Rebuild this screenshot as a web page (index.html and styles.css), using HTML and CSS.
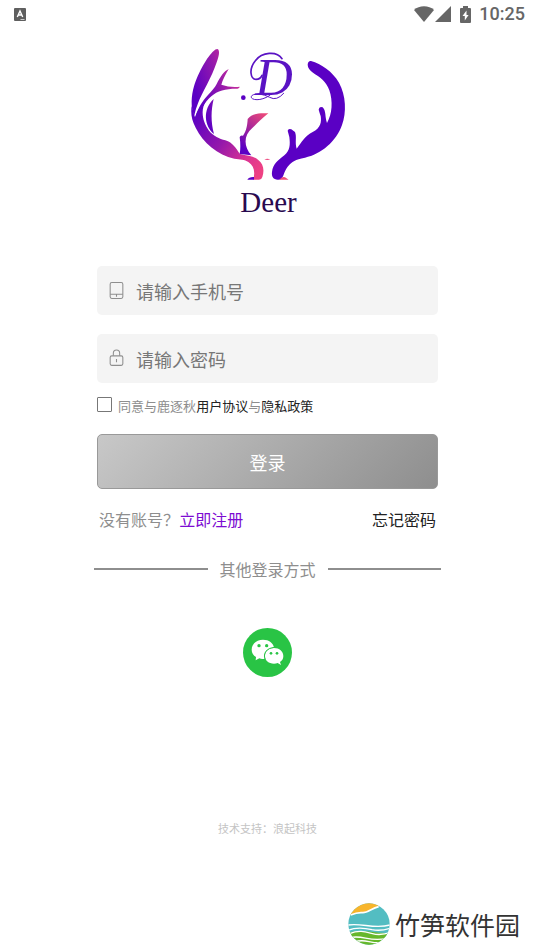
FILE: index.html
```html
<!DOCTYPE html>
<html lang="zh-CN">
<head>
  <meta charset="UTF-8">
  <meta name="viewport" content="width=device-width, initial-scale=1.0">
  <title>登录</title>
  <link rel="stylesheet" href="styles.css">
</head>
<body>
  <header class="status-bar">
    <svg class="status-app" viewBox="0 0 12 13" aria-hidden="true">
      <rect width="12" height="13" rx="1" fill="#5f5f5f"/>
      <path d="M3.3 9 6 3l2.7 6M4.3 7h3.4" fill="none" stroke="#fff" stroke-width="1.4"/>
      <path d="M6.500 11.500h4" stroke="#ccc" stroke-width="1"/>
    </svg>
    <div class="status-right">
      <svg class="status-signal" viewBox="0 0 38 16" aria-hidden="true">
        <path d="M0 4C5-1 15-1 20 4L10 16Z" fill="#666"/>
        <path d="M37 0v16H21Z" fill="#666"/>
      </svg>
      <svg class="status-battery" viewBox="0 0 11 17" aria-hidden="true">
        <path d="M3 0h5v2h2q1 0 1 1v13q0 1-1 1H1q-1 0-1-1V3q0-1 1-1h2Z" fill="#666"/>
        <path d="M6.500 4.500 2.500 10h2.300v4.500L8.600 9H6.500Z" fill="#fff"/>
      </svg>
      <span class="status-time">10:25</span>
    </div>
  </header>

  <main class="login">
    <svg class="logo" viewBox="0 0 540 540" role="img" aria-label="Deer">
      <defs>
        <linearGradient id="antler" gradientUnits="userSpaceOnUse" x1="35" y1="230" x2="250" y2="380">
          <stop offset="0" stop-color="#5a00c4"/>
          <stop offset=".45" stop-color="#9418ab"/>
          <stop offset=".8" stop-color="#dc3492"/>
          <stop offset="1" stop-color="#ee4183"/>
        </linearGradient>
        <linearGradient id="tip" gradientUnits="userSpaceOnUse" x1="50" y1="170" x2="190" y2="120">
          <stop offset="0" stop-color="#5a00c4"/>
          <stop offset=".5" stop-color="#9018ae"/>
          <stop offset="1" stop-color="#d83494"/>
        </linearGradient>
        <linearGradient id="ear" gradientUnits="userSpaceOnUse" x1="182" y1="320" x2="262" y2="222">
          <stop offset="0" stop-color="#5a00c4"/>
          <stop offset=".5" stop-color="#a92799"/>
          <stop offset="1" stop-color="#f04b78"/>
        </linearGradient>
      </defs>
      <!-- left antler -->
      <path fill="url(#tip)" d="M112 27C121 30 117 49 109 70C96 110 66 159 54 190Q47 207 43 226C31 204 34 166 42 139C55 97 83 48 101 33Q106 27 112 27Z"/>
      <path fill="url(#tip)" d="M146 87C136 105 128 119 124 134Q150 143 179 140Q178 146 168 146C137 146 112 152 94 169C74 186 60 210 52 242L46 232C52 208 66 184 84 165C96 152 104 144 110 132C121 109 133 93 146 87Z"/>
      <path fill="url(#antler)" d="M35 198L45 232C52 212 64 193 78 182C60 211 68 246 87 272C101 288 118 296 136 301C159 308 168 326 180 342C202 348 220 347 234 359C250 372 254 388 247 411Q245 419 237 419H220C226 395 222 377 205 366C194 358 180 359 163 356C113 345 69 308 47 263C34 239 32 218 35 198Z"/>
      <path fill="url(#tip)" d="M101 177C93 211 92 245 102 282C73 258 67 209 101 177Z"/>
      <path fill="#5a00c4" d="M202 419Q207 410 222 411V419Z"/>
      <!-- ear -->
      <path fill="url(#ear)" d="M265 220C247 234 232 250 217 264C191 285 190 319 214 346L179 342Q183 320 179 292Q181 284 189 287C200 272 202 254 203 237C215 221 237 218 265 220Z"/>
      <path fill="#ee4a80" d="M253 358q9-4 18 0q-9 4-18 0Z"/>
      <!-- right antler -->
      <path fill="#5a00c4" d="M393 63C424 72 457 94 477 128C498 166 500 217 486 255C469 304 424 342 375 353C344 359 338 363 323 380C309 397 312 419 295 419C281 420 274 410 276 396C279 371 295 360 313 346C330 331 331 315 328 291L323 272Q325 264 334 268L345 276C351 291 344 307 350 326C363 309 376 286 398 276C422 264 425 247 422 228Q419 220 416 209Q417 198 428 202C439 213 434 230 441 249C457 222 459 183 448 151C439 124 419 111 399 98Q383 86 383 74Q384 62 393 63Z"/>
      <path fill="#f05078" d="M298 419Q306 408 315 412L326 419Z"/>
      <!-- monogram and its flourishes -->
      <circle cx="190" cy="173" r="7" fill="#5a00c4"/>
      <text class="logo-letter" x="226" y="166">D</text>
      <g fill="none" stroke="#5a13c4" stroke-linecap="round">
        <path d="M306 56C290 32 246 36 226 62C205 88 212 118 228 118Q241 118 246 106" stroke-width="5"/>
        <path d="M274 162C255 180 221 184 214 173C211 159 245 159 269 172Q290 184 311 160" stroke-width="3"/>
      </g>
      <text class="logo-name" x="181" y="515">Deer</text>
    </svg>

    <form class="form">
      <label class="field">
        <svg class="field-icon" viewBox="0 0 14 18" aria-hidden="true">
          <rect x="1" y="1.500" width="12" height="15" rx="1.500"/>
          <path d="M1 12.500h12M7 12.500v2.500"/>
        </svg>
        <input type="tel" placeholder="请输入手机号" aria-label="手机号">
      </label>
      <label class="field">
        <svg class="field-icon" viewBox="0 0 14 18" aria-hidden="true">
          <rect x="1" y="6.500" width="12" height="9" rx="1.500"/>
          <path d="M4 6.500V4a3 3 0 0 1 6 0v2.500M7 9.500v3"/>
        </svg>
        <input type="password" placeholder="请输入密码" aria-label="密码">
      </label>

      <div class="agree">
        <input type="checkbox" id="agree">
        <label for="agree">同意与鹿逐秋<a href="#">用户协议</a>与<a href="#">隐私政策</a></label>
      </div>

      <button type="submit" class="submit">登录</button>
    </form>

    <div class="links">
      <span>没有账号？<a href="#" class="register">立即注册</a></span>
      <a href="#">忘记密码</a>
    </div>

    <div class="divider">其他登录方式</div>

    <button type="button" class="wechat" aria-label="微信登录">
      <svg viewBox="0 0 147 147">
        <circle cx="73.500" cy="73.500" r="73.500" fill="#29c445"/>
        <path fill="#fff" d="M60 35C40 35 26 48 26 65C26 75 31 82 39 87L38 97L49 91Q56 94 66 92A28 25 0 0 1 93 59C91 45 78 35 60 35Z"/>
        <path fill="#fff" d="M93 60C77 60 66 70 66 84S77 107 93 107Q99 107 104 105L114 111L111 102C118 98 121 92 121 84C121 70 109 60 93 60Z"/>
        <path fill="none" stroke="#29c445" stroke-width="3" d="M66 94C60 76 70 60 95 58"/>
        <g fill="#29c445">
          <circle cx="48" cy="53" r="5"/>
          <circle cx="71" cy="53" r="5"/>
          <circle cx="84" cy="76" r="4"/>
          <circle cx="102" cy="76" r="4"/>
        </g>
      </svg>
    </button>

    <p class="support">技术支持：浪起科技</p>
  </main>

  <footer class="brand">
    <svg class="brand-icon" viewBox="0 0 126 126" aria-hidden="true">
      <defs>
        <clipPath id="disc"><circle cx="63" cy="63" r="62"/></clipPath>
      </defs>
      <g clip-path="url(#disc)">
        <rect width="126" height="126" fill="#53bdc2"/>
        <path d="M0 0H98L88 13C71 16 60 29 45 29Q29 27 8 36H0Z" fill="#f8b52c"/>
        <path d="M8 36Q29 27 45 29C60 29 71 16 92 11" fill="none" stroke="#fff" stroke-width="5"/>
        <path d="M0 90C42 74 84 94 126 89V126H0Z" fill="#66b72b"/>
        <g fill="none" stroke="#fff" stroke-width="4">
          <path d="M0 66C41 59 78 79 126 66"/>
          <path d="M0 82C26 71 51 75 72 80Q97 85 126 76"/>
          <path d="M5 92C40 77 62 91 83 94Q106 96 126 89"/>
          <path d="M7 104C43 94 66 119 116 106"/>
          <path d="M20 117C49 105 65 122 99 119"/>
        </g>
      </g>
    </svg>
    <span>竹笋软件园</span>
  </footer>
</body>
</html>
```

FILE: styles.css
```css
* {
  box-sizing: border-box;
}
body {
  margin: 0;
  min-height: 100vh;
  display: flex;
  flex-direction: column;
  background: #fff;
  color: #8e8e8e;
  font-family: "Noto Sans CJK SC", sans-serif;
  font-size: 16px;
  line-height: 24px;
}
a {
  color: #222;
  text-decoration: none;
}
button {
  font-family: inherit;
  cursor: pointer;
}

.status-bar {
  display: flex;
  justify-content: space-between;
  align-items: center;
  height: 28px;
  padding: 0 9px 0 14px;
}
.status-app {
  width: 12px;
  height: 13px;
}
.status-right {
  display: flex;
  align-items: center;
  gap: 8px;
}
.status-signal {
  width: 38px;
  height: 16px;
}
.status-battery {
  width: 11px;
  height: 17px;
}
.status-time {
  color: #666;
  font-family: Roboto, sans-serif;
  font-size: 18px;
  font-weight: 500;
}

.login {
  flex: 1;
  display: flex;
  flex-direction: column;
  padding: 12px 18% 0 calc(18% + 1px);
}
.logo {
  align-self: center;
  width: 180px;
  height: 180px;
  margin-left: 4px;
}
.logo-letter {
  fill: #5a13c4;
  font-family: "Liberation Serif", serif;
  font-size: 156px;
  font-style: italic;
}
.logo-name {
  fill: #29094f;
  font-family: "Liberation Serif", serif;
  font-size: 87px;
}

.form {
  margin-top: 46px;
}
.field {
  display: flex;
  align-items: center;
  gap: 12px;
  height: 49px;
  margin-bottom: 19px;
  padding: 0 12px;
  border-radius: 5px;
  background: #f4f4f4;
}
.field-icon {
  flex: none;
  width: 15px;
  height: 19px;
  fill: none;
  stroke: #8e8e8e;
}
.field input {
  flex: 1;
  min-width: 0;
  padding: 0;
  border: 0;
  outline: 0;
  background: none;
  color: #333;
  font-family: inherit;
  font-size: 18px;
}
.field input::placeholder {
  color: #777;
}
.agree {
  display: flex;
  align-items: center;
  gap: 6px;
  margin-top: -8px;
  font-size: 13px;
}
.agree input {
  appearance: none;
  width: 15px;
  height: 15px;
  margin: 0 0 4px;
  border: 1px solid #777;
  border-radius: 1px;
}
.agree input:checked {
  background: #8e8e8e;
}
.submit {
  display: block;
  width: 100%;
  height: 55px;
  margin-top: 16px;
  border: 1px solid #999;
  border-radius: 5px;
  background: linear-gradient(135deg, #c8c8c8, #8e8e8e);
  color: #fff;
  font-size: 18px;
}

.links {
  display: flex;
  justify-content: space-between;
  margin-top: 18px;
  padding: 0 2px;
}
.links .register {
  color: #7d0bd2;
}
.divider {
  display: flex;
  align-items: center;
  gap: 12px;
  margin: 26px -3px 0;
}
.divider::before,
.divider::after {
  content: "";
  flex: 1;
  height: 2px;
  background: #8e8e8e;
}
.wechat {
  align-self: center;
  width: 49px;
  height: 49px;
  margin-top: 47px;
  padding: 0;
  border: 0;
  border-radius: 50%;
  background: none;
}
.wechat svg {
  display: block;
}
.support {
  margin: 139px 0 0;
  color: #c4c4c4;
  font-size: 11px;
  text-align: center;
}

.brand {
  display: flex;
  justify-content: flex-end;
  align-items: center;
  gap: 5px;
  padding: 0 14px 5px 0;
  color: #333;
  font-size: 25px;
  line-height: 42px;
}
.brand-icon {
  width: 42px;
  height: 42px;
}
```
